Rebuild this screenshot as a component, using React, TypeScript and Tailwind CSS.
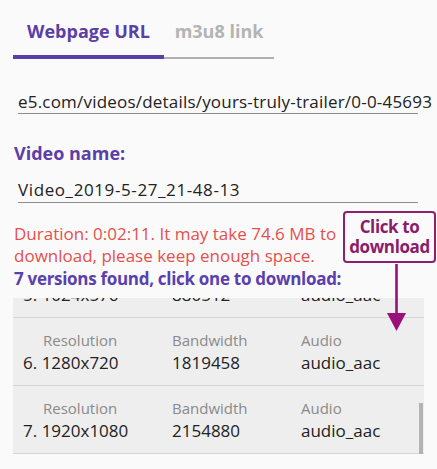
import { useLayoutEffect, useRef } from "react";

const versions = [
  { res: "320x180", bw: "247840" },
  { res: "480x270", bw: "416384" },
  { res: "640x360", bw: "579920" },
  { res: "768x432", bw: "711680" },
  { res: "1024x576", bw: "880512" },
  { res: "1280x720", bw: "1819458" },
  { res: "1920x1080", bw: "2154880" },
];

const VersionRow = ({ index, res, bw }: { index: number; res: string; bw: string }) => (
  <div className="h-[68px] border-b border-[#d6d6d6] pl-[10px] pt-[12px] grid grid-cols-[149px_129px_1fr]">
    <div>
      <div className="pl-[20px] text-[15px] leading-[20px] text-[#8a8a8a]">Resolution</div>
      <div className="mt-[2px] text-[17px] leading-[22px] text-[#222]">
        {index}. {res}
      </div>
    </div>
    <div>
      <div className="text-[15px] leading-[20px] text-[#8a8a8a]">Bandwidth</div>
      <div className="mt-[2px] text-[17px] leading-[22px] text-[#222]">{bw}</div>
    </div>
    <div>
      <div className="text-[15px] leading-[20px] text-[#8a8a8a]">Audio</div>
      <div className="mt-[2px] text-[17px] leading-[22px] text-[#222]">audio_aac</div>
    </div>
  </div>
);

export default function App() {
  const listRef = useRef<HTMLDivElement>(null);

  // start scrolled to the end of the list
  useLayoutEffect(() => {
    const el = listRef.current;
    if (el) el.scrollTop = el.scrollHeight - el.clientHeight;
  }, []);

  return (
    <div className="relative w-full h-[469px] overflow-hidden bg-[#fafafa] font-['Open_Sans',sans-serif]">
      {/* tabs */}
      <div className="flex items-end ml-[13px]">
        <div className="w-[151px] flex flex-col">
          <div className="pt-[19px] text-center text-[18px] leading-[24px] font-bold text-[#5b3ea6]">
            Webpage URL
          </div>
          <div className="mt-[12px] h-[4px] bg-[#5b3ea6]" />
        </div>
        <div className="w-[110px] flex flex-col">
          <div className="pt-[19px] text-center text-[18px] leading-[24px] font-bold text-[#b4b4b4]">
            m3u8 link
          </div>
          <div className="mt-[14px] h-[2px] bg-[#b0b0b0]" />
        </div>
      </div>

      {/* url field */}
      <div className="ml-[18px] w-[400px] mt-[31px] border-b border-[#8c8c8c]">
        <div className="whitespace-nowrap text-[17px] leading-[23px] tracking-[0.2px] text-[#222]">
          e5.com/videos/details/yours-truly-trailer/0-0-45693
        </div>
      </div>

      <div className="ml-[14px] mt-[27px] text-[18px] leading-[24px] font-bold text-[#5b3ea6]">Video name:</div>

      <div className="ml-[18px] w-[400px] mt-[13px] border-b border-[#8c8c8c]">
        <div className="whitespace-nowrap text-[17px] leading-[24px] tracking-[0.6px] text-[#222]">
          Video_2019-5-27_21-48-13
        </div>
      </div>

      <div className="ml-[14px] mt-[20px] text-[17px] leading-[22px] text-[#e5504c]">
        Duration: 0:02:11. It may take 74.6 MB to
        <br />
        download, please keep enough space.
      </div>
      <div className="ml-[14px] mt-[1px] text-[17px] leading-[22px] tracking-[-0.3px] font-bold text-[#5a3fae]">
        7 versions found, click one to download:
      </div>

      {/* versions list */}
      <div className="relative ml-[13px] mt-[8px] w-[411px] h-[156px] bg-[#eeeeee]">
        <div ref={listRef} className="h-full overflow-hidden">
          {versions.map((v, i) => (
            <VersionRow key={v.res} index={i + 1} res={v.res} bw={v.bw} />
          ))}
        </div>
        <div className="absolute right-[1px] bottom-0 w-[4px] h-[51px] bg-[#b3b3b3]" />
      </div>

      {/* annotation */}
      <div className="absolute left-[343px] top-[211px] w-[93px] h-[52px] border-2 border-[#8e1e6e] rounded-[4px] bg-[#fafafa] flex flex-col items-center justify-center text-[17px] leading-[20px] tracking-[-0.4px] font-bold text-[#8a1c6c]">
        <span>Click to</span>
        <span>download</span>
      </div>
      <svg className="absolute left-[386px] top-[264px]" width="21" height="68" viewBox="0 0 21 68">
        <line x1="10.5" y1="0" x2="10.5" y2="52" stroke="#9b0f78" strokeWidth="2.6" />
        <polygon points="1,49 20,49 10.5,67" fill="#9b0f78" />
      </svg>
    </div>
  );
}
